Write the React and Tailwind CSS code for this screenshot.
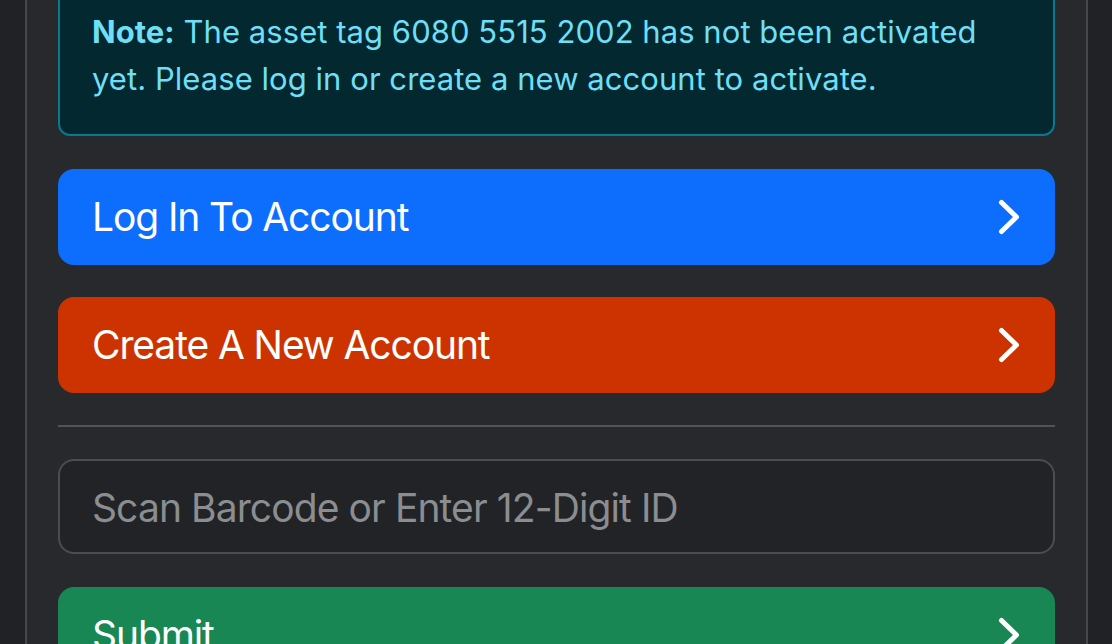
import React from "react";

function Chevron() {
  return (
    <svg width="24" height="36" viewBox="0 0 24 36" className="shrink-0 block" fill="none">
      <polyline points="4.5,3.5 19.5,18 4.5,32.5" stroke="white" strokeWidth="5" strokeLinecap="round" strokeLinejoin="round" />
    </svg>
  );
}

function Btn({ label, color }) {
  return (
    <button
      className={`w-full flex items-center justify-between rounded-[16px] border-2 px-[32px] py-[16px] text-left text-white text-[39px] tracking-[-1.1px] leading-[60px] ${color}`}
    >
      <span>{label}</span>
      <Chevron />
    </button>
  );
}

export default function App() {
  return (
    <div
      className="w-full h-[644px] overflow-hidden bg-[#212226] pl-[25px] pr-[24px]"
      style={{ fontFamily: "Inter, 'Noto Sans', sans-serif" }}
    >
      <div className="h-[700px] bg-[#27292d] border-x-2 border-[#45484c] px-[31px]">
        <div className="-mt-[26px] flex flex-col">
          <div className="rounded-[12px] border-2 border-[#087990] bg-[#032830] p-[32px] text-[#6edff6] text-[31px] leading-[47px] tracking-[0.05px]">
            <b className="font-bold">Note:</b> The asset tag 6080 5515 2002 has not been activated yet. Please log in or create a new account to activate.
          </div>
          <div className="mt-[33px]">
            <Btn label="Log In To Account" color="bg-[#0d6efd] border-[#0d6efd]" />
          </div>
          <div className="mt-[32px]">
            <Btn label="Create A New Account" color="bg-[#cc3300] border-[#cc3300]" />
          </div>
          <div className="mt-[32px] h-[2px] bg-[#505357]" />
          <div className="mt-[32px]">
            <input
              placeholder="Scan Barcode or Enter 12-Digit ID"
              className="w-full rounded-[16px] border-2 border-[#4a4e52] bg-[#212326] px-[32px] pt-[17px] pb-[14px] text-[39px] tracking-[-0.9px] leading-[60px] text-white placeholder:text-[#8b8d90] outline-none"
            />
          </div>
          <div className="mt-[33px]">
            <Btn label="Submit" color="bg-[#198754] border-[#198754]" />
          </div>
        </div>
      </div>
    </div>
  );
}
